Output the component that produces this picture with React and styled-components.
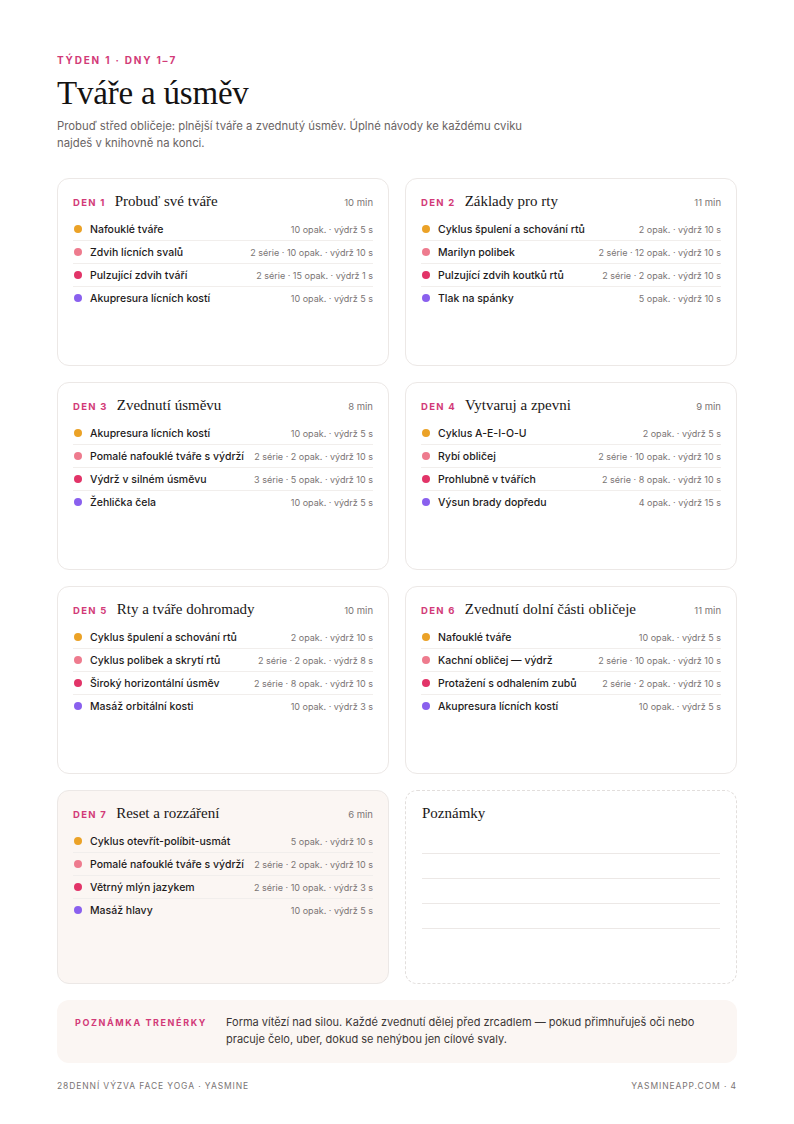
import React from 'react';
import styled, { createGlobalStyle } from 'styled-components';

const GlobalStyle = createGlobalStyle`
  html, body { margin: 0; padding: 0; background: #fff; }
  body { font-family: Inter, "Noto Sans", sans-serif; color: #1c1a1a; }
`;

const DOT = {
  orange: '#eba227',
  rose: '#ee7b8e',
  magenta: '#e23468',
  violet: '#8a60ee',
};

const days = [
  {
    n: 1, title: 'Probuď své tváře', time: '10 min',
    items: [
      ['orange', 'Nafouklé tváře', '10 opak. · výdrž 5 s'],
      ['rose', 'Zdvih lícních svalů', '2 série · 10 opak. · výdrž 10 s'],
      ['magenta', 'Pulzující zdvih tváří', '2 série · 15 opak. · výdrž 1 s'],
      ['violet', 'Akupresura lícních kostí', '10 opak. · výdrž 5 s'],
    ],
  },
  {
    n: 2, title: 'Základy pro rty', time: '11 min',
    items: [
      ['orange', 'Cyklus špulení a schování rtů', '2 opak. · výdrž 10 s'],
      ['rose', 'Marilyn polibek', '2 série · 12 opak. · výdrž 10 s'],
      ['magenta', 'Pulzující zdvih koutků rtů', '2 série · 2 opak. · výdrž 10 s'],
      ['violet', 'Tlak na spánky', '5 opak. · výdrž 10 s'],
    ],
  },
  {
    n: 3, title: 'Zvednutí úsměvu', time: '8 min',
    items: [
      ['orange', 'Akupresura lícních kostí', '10 opak. · výdrž 5 s'],
      ['rose', 'Pomalé nafouklé tváře s výdrží', '2 série · 2 opak. · výdrž 10 s'],
      ['magenta', 'Výdrž v silném úsměvu', '3 série · 5 opak. · výdrž 10 s'],
      ['violet', 'Žehlička čela', '10 opak. · výdrž 5 s'],
    ],
  },
  {
    n: 4, title: 'Vytvaruj a zpevni', time: '9 min',
    items: [
      ['orange', 'Cyklus A-E-I-O-U', '2 opak. · výdrž 5 s'],
      ['rose', 'Rybí obličej', '2 série · 10 opak. · výdrž 10 s'],
      ['magenta', 'Prohlubně v tvářích', '2 série · 8 opak. · výdrž 10 s'],
      ['violet', 'Výsun brady dopředu', '4 opak. · výdrž 15 s'],
    ],
  },
  {
    n: 5, title: 'Rty a tváře dohromady', time: '10 min',
    items: [
      ['orange', 'Cyklus špulení a schování rtů', '2 opak. · výdrž 10 s'],
      ['rose', 'Cyklus polibek a skrytí rtů', '2 série · 2 opak. · výdrž 8 s'],
      ['magenta', 'Široký horizontální úsměv', '2 série · 8 opak. · výdrž 10 s'],
      ['violet', 'Masáž orbitální kosti', '10 opak. · výdrž 3 s'],
    ],
  },
  {
    n: 6, title: 'Zvednutí dolní části obličeje', time: '11 min',
    items: [
      ['orange', 'Nafouklé tváře', '10 opak. · výdrž 5 s'],
      ['rose', 'Kachní obličej — výdrž', '2 série · 10 opak. · výdrž 10 s'],
      ['magenta', 'Protažení s odhalením zubů', '2 série · 2 opak. · výdrž 10 s'],
      ['violet', 'Akupresura lícních kostí', '10 opak. · výdrž 5 s'],
    ],
  },
  {
    n: 7, title: 'Reset a rozzáření', time: '6 min', tinted: true,
    items: [
      ['orange', 'Cyklus otevřít-políbit-usmát', '5 opak. · výdrž 10 s'],
      ['rose', 'Pomalé nafouklé tváře s výdrží', '2 série · 2 opak. · výdrž 10 s'],
      ['magenta', 'Větrný mlýn jazykem', '2 série · 10 opak. · výdrž 3 s'],
      ['violet', 'Masáž hlavy', '10 opak. · výdrž 5 s'],
    ],
  },
];

const Page = styled.div`
  width: 794px;
  height: 1124px;
  box-sizing: border-box;
  padding: 53px 57px 0 57px;
  display: flex;
  flex-direction: column;
`;

const Eyebrow = styled.div`
  font-size: 10px;
  font-weight: 700;
  letter-spacing: 1.8px;
  color: #d23a78;
  line-height: 14px;
`;

const Title = styled.h1`
  margin: 7px 0 0;
  font-family: "Liberation Serif", "DejaVu Serif", serif;
  font-weight: 500;
  font-size: 33px;
  line-height: 38px;
  color: #141212;
  letter-spacing: -0.2px;
`;

const Lead = styled.p`
  margin: 6px 0 0;
  width: 480px;
  font-size: 11.3px;
  line-height: 17px;
  color: #6a6464;
`;

const Grid = styled.div`
  margin-top: 26px;
  display: grid;
  grid-template-columns: 1fr 1fr;
  grid-template-rows: repeat(3, 188px) 194px;
  gap: 16px;
`;

const Card = styled.div`
  box-sizing: border-box;
  border: 1px solid #ece8e6;
  border-radius: 12px;
  background: ${p => (p.$tinted ? '#fbf6f3' : '#fff')};
  padding: 11px 15px 12px 15px;
  display: flex;
  flex-direction: column;
`;

const CardHead = styled.div`
  display: flex;
  align-items: baseline;
  height: 22px;
  line-height: 22px;
`;

const DayTag = styled.span`
  font-size: 9.5px;
  font-weight: 700;
  letter-spacing: 1.3px;
  color: #d23a78;
  margin-right: 9px;
`;

const DayTitle = styled.span`
  font-family: "Liberation Serif", "DejaVu Serif", serif;
  font-size: 15px;
  color: #1a1717;
  flex: 1;
`;

const Time = styled.span`
  font-size: 9.5px;
  color: #7a7474;
`;

const List = styled.ul`
  list-style: none;
  margin: 6px 0 0;
  padding: 0;
`;

const Row = styled.li`
  display: flex;
  align-items: center;
  height: 22px;
  border-bottom: 1px solid #f1eeec;
  &:last-child { border-bottom: none; }
`;

const Dot = styled.span`
  width: 8px;
  height: 8px;
  border-radius: 50%;
  background: ${p => DOT[p.$tone]};
  margin: 0 8px 0 1px;
  flex: none;
`;

const Name = styled.span`
  font-size: 10.5px;
  font-weight: 500;
  color: #1e1b1b;
  flex: 1;
  white-space: nowrap;
`;

const Meta = styled.span`
  font-size: 9px;
  color: #7a7474;
  white-space: nowrap;
`;

const NotesCard = styled.div`
  box-sizing: border-box;
  border: 1px dashed #e2dedc;
  border-radius: 12px;
  padding: 11px 16px;
  display: flex;
  flex-direction: column;
`;

const NotesTitle = styled.div`
  font-family: "Liberation Serif", "DejaVu Serif", serif;
  font-size: 15px;
  line-height: 22px;
  color: #1a1717;
`;

const Line = styled.div`
  height: 0;
  border-top: 1px solid #ece8e6;
  margin-top: ${p => (p.$first ? '29px' : '24px')};
`;

const Tip = styled.div`
  margin-top: 16px;
  background: #fbf6f3;
  border-radius: 12px;
  padding: 14px 18px 15px 18px;
  display: flex;
  align-items: flex-start;
`;

const TipLabel = styled.div`
  width: 151px;
  flex: none;
  font-size: 9px;
  font-weight: 700;
  letter-spacing: 1.6px;
  color: #d23a78;
  line-height: 17px;
`;

const TipText = styled.div`
  font-size: 11px;
  line-height: 17px;
  color: #3b3636;
  width: 470px;
`;

const Footer = styled.div`
  margin-top: 18px;
  display: flex;
  justify-content: space-between;
  font-size: 8.5px;
  letter-spacing: 0.9px;
  color: #7a7474;
  text-transform: uppercase;
`;

const DayCard = ({ day }) => (
  <Card $tinted={day.tinted}>
    <CardHead>
      <DayTag>DEN {day.n}</DayTag>
      <DayTitle>{day.title}</DayTitle>
      <Time>{day.time}</Time>
    </CardHead>
    <List>
      {day.items.map(([tone, name, meta]) => (
        <Row key={name}>
          <Dot $tone={tone} />
          <Name>{name}</Name>
          <Meta>{meta}</Meta>
        </Row>
      ))}
    </List>
  </Card>
);

export default function App() {
  return (
    <>
      <GlobalStyle />
      <Page>
        <Eyebrow>TÝDEN 1 · DNY 1–7</Eyebrow>
        <Title>Tváře a úsměv</Title>
        <Lead>
          Probuď střed obličeje: plnější tváře a zvednutý úsměv. Úplné návody ke každému cviku
          najdeš v knihovně na konci.
        </Lead>
        <Grid>
          {days.map(d => <DayCard key={d.n} day={d} />)}
          <NotesCard>
            <NotesTitle>Poznámky</NotesTitle>
            <Line $first />
            <Line />
            <Line />
            <Line />
          </NotesCard>
        </Grid>
        <Tip>
          <TipLabel>POZNÁMKA TRENÉRKY</TipLabel>
          <TipText>
            Forma vítězí nad silou. Každé zvednutí dělej před zrcadlem — pokud přimhuřuješ oči nebo
            pracuje čelo, uber, dokud se nehýbou jen cílové svaly.
          </TipText>
        </Tip>
        <Footer>
          <span>28denní výzva Face Yoga · Yasmine</span>
          <span>yasmineapp.com · 4</span>
        </Footer>
      </Page>
    </>
  );
}
